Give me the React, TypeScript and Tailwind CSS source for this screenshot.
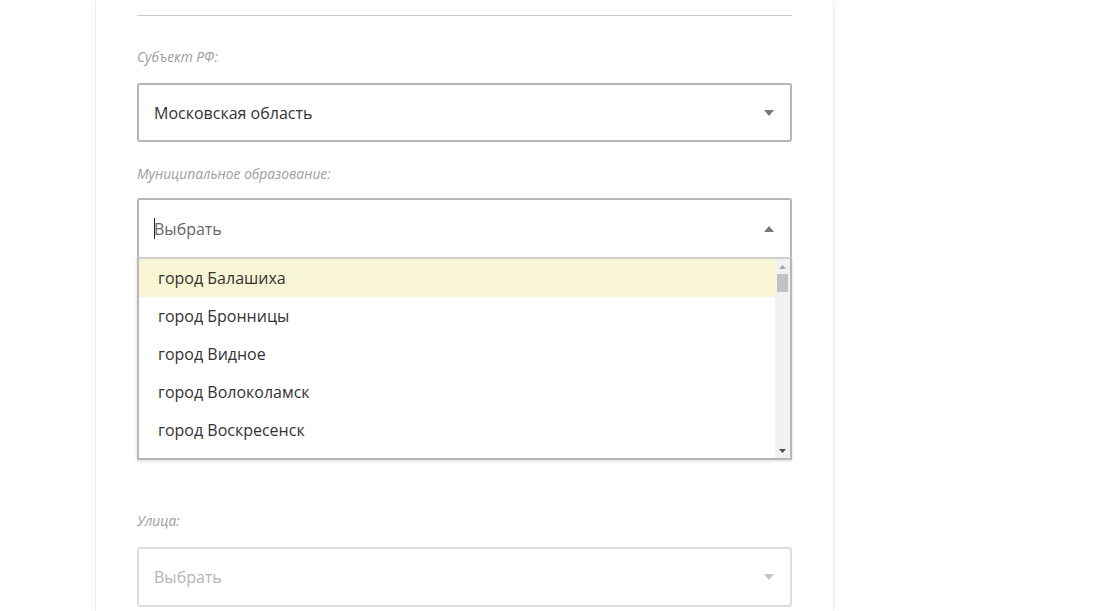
import React from 'react';

const font = { fontFamily: '"Open Sans", "Noto Sans", sans-serif' };

const cities = [
  'город Балашиха',
  'город Бронницы',
  'город Видное',
  'город Волоколамск',
  'город Воскресенск',
];

const Arrow = ({ up = false, light = false }: { up?: boolean; light?: boolean }) => (
  <svg width="10" height="6" viewBox="0 0 10 6" className={light ? 'text-[#c4c4c4]' : 'text-[#777]'}>
    {up ? <path d="M0 6 L5 0 L10 6 Z" fill="currentColor" /> : <path d="M0 0 L10 0 L5 6 Z" fill="currentColor" />}
  </svg>
);

const Label = ({ children }: { children: React.ReactNode }) => (
  <div className="text-[13.8px] italic text-[#9d9d9d] leading-[18px]">{children}</div>
);

export default function App() {
  return (
    <div className="h-[611px] w-full overflow-hidden bg-white" style={font}>
      <div className="ml-[95px] h-full w-[739px] border-x border-[#efefef] px-[41px] pt-[15px] shadow-[0_0_6px_rgba(0,0,0,0.04)]">
        <div className="h-px bg-[#c9c9c9]" />

        <div className="mt-[32px]">
          <Label>Субъект РФ:</Label>
        </div>
        <div className="mt-[17px] flex h-[59px] items-center justify-between rounded-[3px] border-2 border-[#b7b7b7] pl-[15px] pr-4">
          <span className="text-[16px] text-[#333]">Московская область</span>
          <Arrow />
        </div>

        <div className="mt-[23px]">
          <Label>Муниципальное образование:</Label>
        </div>
        <div className="mt-[15px] flex h-[59px] items-center justify-between rounded-t-[3px] border-2 border-b-0 border-[#b7b7b7] pl-[15px] pr-4">
          <span className="flex items-center text-[16px] text-[#666]">
            <span className="mr-[-1px] inline-block h-[21px] w-px bg-[#222]" />
            Выбрать
          </span>
          <Arrow up />
        </div>
        <div className="flex h-[203px] border-2 border-t-[2px] border-[#b7b7b7] border-t-[#cfcfcf] shadow-[0_1px_3px_rgba(0,0,0,0.15)]">
          <div className="flex-1 overflow-hidden">
            {cities.map((c, i) => (
              <div
                key={c}
                className={`flex h-[38px] items-center pl-[19px] text-[16px] text-[#333] ${i === 0 ? 'bg-[#f8f5d4]' : ''}`}
              >
                {c}
              </div>
            ))}
          </div>
          <div className="flex w-[15px] flex-col items-center bg-[#f1f1f1]">
            <div className="flex h-[15px] items-center justify-center">
              <svg width="7" height="4" viewBox="0 0 7 4"><path d="M0 4 L3.5 0 L7 4 Z" fill="#a3a3a3" /></svg>
            </div>
            <div className="h-[18px] w-[11px] bg-[#c1c1c1]" />
            <div className="flex-1" />
            <div className="flex h-[15px] items-center justify-center">
              <svg width="7" height="4" viewBox="0 0 7 4"><path d="M0 0 L7 0 L3.5 4 Z" fill="#505050" /></svg>
            </div>
          </div>
        </div>

        <div className="mt-[52px]">
          <Label>Улица:</Label>
        </div>
        <div className="mt-[17px] flex h-[60px] items-center justify-between rounded-[3px] border-2 border-[#dedede] pl-[15px] pr-4">
          <span className="text-[16px] text-[#b5b5b5]">Выбрать</span>
          <Arrow light />
        </div>
      </div>
    </div>
  );
}
